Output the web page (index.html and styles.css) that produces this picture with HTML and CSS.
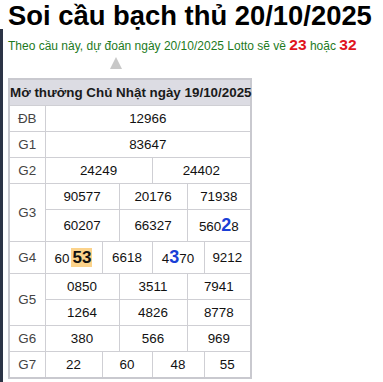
FILE: index.html
```html
<!DOCTYPE html>
<html lang="vi">
<head>
<meta charset="utf-8">
<title>Soi cầu bạch thủ</title>
<link rel="stylesheet" href="styles.css">
</head>
<body>
<div class="edge"></div>
<h1 class="title">Soi cầu bạch thủ 20/10/2025</h1>
<p class="predict">Theo cầu này, dự đoán ngày 20/10/2025 Lotto sẽ về <b class="hot">23</b> hoặc <b class="hot">32</b></p>
<div class="arrow"></div>
<table class="kq">
  <colgroup>
    <col class="c-label">
    <col class="c1"><col class="c2"><col class="c3"><col class="c4"><col class="c5"><col class="c6">
  </colgroup>
  <thead>
    <tr><th colspan="7" class="head">Mở thưởng Chủ Nhật ngày 19/10/2025</th></tr>
  </thead>
  <tbody>
    <tr><td class="lbl">ĐB</td><td colspan="6">12966</td></tr>
    <tr><td class="lbl">G1</td><td colspan="6">83647</td></tr>
    <tr><td class="lbl">G2</td><td colspan="3">24249</td><td colspan="3">24402</td></tr>
    <tr><td class="lbl" rowspan="2">G3</td><td colspan="2">90577</td><td colspan="2">20176</td><td colspan="2">71938</td></tr>
    <tr class="tall"><td colspan="2">60207</td><td colspan="2">66327</td><td colspan="2">560<b class="blue">2</b>8</td></tr>
    <tr class="tall"><td class="lbl">G4</td><td>60<b class="mark">53</b></td><td colspan="2">6618</td><td colspan="2">4<b class="blue">3</b>70</td><td>9212</td></tr>
    <tr><td class="lbl" rowspan="2">G5</td><td colspan="2">0850</td><td colspan="2">3511</td><td colspan="2">7941</td></tr>
    <tr><td colspan="2">1264</td><td colspan="2">4826</td><td colspan="2">8778</td></tr>
    <tr><td class="lbl">G6</td><td colspan="2">380</td><td colspan="2">566</td><td colspan="2">969</td></tr>
    <tr><td class="lbl">G7</td><td>22</td><td colspan="2">60</td><td colspan="2">48</td><td>55</td></tr>
  </tbody>
</table>
</body>
</html>
```
FILE: styles.css
```css
html, body {
  margin: 0;
  background: #ffffff;
}
body {
  padding: 0 8px;
  font-family: "Liberation Sans", Arial, sans-serif;
  color: #111;
  position: relative;
  min-height: 382px;
  box-sizing: border-box;
}
.edge {
  position: absolute;
  left: 0;
  top: 29px;
  bottom: 0;
  width: 3px;
  background: #2c3446;
}
.title {
  margin: 0;
  padding-top: 1px;
  font-size: 27.4px;
  line-height: 30px;
  font-weight: bold;
  color: #000;
}
.predict {
  margin: 5px 0 0;
  font-size: 12px;
  line-height: 18px;
  color: #1d7a1d;
}
.hot {
  color: #e0141e;
  font-size: 15.5px;
}
.arrow {
  width: 0;
  height: 0;
  margin: 2px 0 0 102px;
  border-left: 6px solid transparent;
  border-right: 6px solid transparent;
  border-bottom: 12px solid #c8c8c8;
}
.kq {
  margin-top: 9px;
  border-collapse: collapse;
  table-layout: fixed;
  width: 244px;
  border: 2px solid #c9c9cf;
  font-size: 13.4px;
}
.c-label { width: 36px; }
.c1 { width: 57px; }
.c2 { width: 17px; }
.c3 { width: 33px; }
.c4 { width: 35px; }
.c5 { width: 17px; }
.c6 { width: 47px; }
.kq th, .kq td {
  border: 1px solid #cfcfd4;
  text-align: center;
  padding: 0;
  height: 25px;
  white-space: nowrap;
}
.kq .head {
  background: #dcdce3;
  font-weight: bold;
  font-size: 13.4px;
  color: #1a1a1a;
  height: 25px;
}
.kq .lbl {
  color: #444;
}
.kq tr.tall td {
  height: 31px;
}
.blue {
  color: #1a3fd6;
  font-size: 18px;
}
.mark {
  background: #fcd38b;
  font-size: 17px;
  padding: 0 1px;
  margin-left: 2px;
}
```
